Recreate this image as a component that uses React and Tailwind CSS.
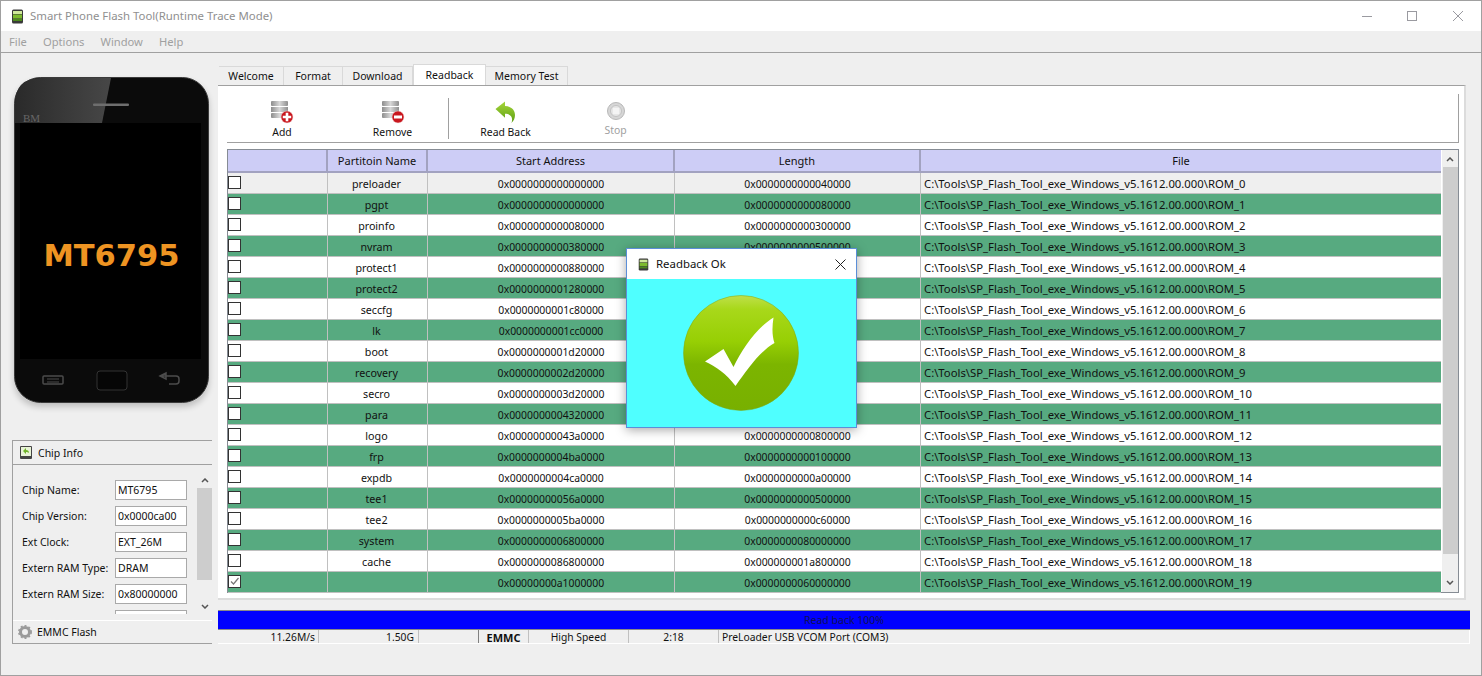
import React from "react";

const rows = [
  ["preloader", "0x0000000000000000", "0x0000000000040000"],
  ["pgpt", "0x0000000000000000", "0x0000000000080000"],
  ["proinfo", "0x0000000000080000", "0x0000000000300000"],
  ["nvram", "0x0000000000380000", "0x0000000000500000"],
  ["protect1", "0x0000000000880000", "0x0000000000a00000"],
  ["protect2", "0x0000000001280000", "0x0000000000a00000"],
  ["seccfg", "0x0000000001c80000", "0x0000000000040000"],
  ["lk", "0x0000000001cc0000", "0x0000000000060000"],
  ["boot", "0x0000000001d20000", "0x0000000001000000"],
  ["recovery", "0x0000000002d20000", "0x0000000001000000"],
  ["secro", "0x0000000003d20000", "0x0000000000600000"],
  ["para", "0x0000000004320000", "0x0000000000080000"],
  ["logo", "0x00000000043a0000", "0x0000000000800000"],
  ["frp", "0x0000000004ba0000", "0x0000000000100000"],
  ["expdb", "0x0000000004ca0000", "0x0000000000a00000"],
  ["tee1", "0x00000000056a0000", "0x0000000000500000"],
  ["tee2", "0x0000000005ba0000", "0x0000000000c60000"],
  ["system", "0x0000000006800000", "0x0000000080000000"],
  ["cache", "0x0000000086800000", "0x000000001a800000"],
  ["", "0x00000000a1000000", "0x0000000060000000"],
];

const chipInfo = [
  ["Chip Name:", "MT6795"],
  ["Chip Version:", "0x0000ca00"],
  ["Ext Clock:", "EXT_26M"],
  ["Extern RAM Type:", "DRAM"],
  ["Extern RAM Size:", "0x80000000"],
  ["", ""],
];

const AppIcon = ({ className }) => (
  <svg viewBox="0 0 12 15" className={className}>
    <rect x="0.5" y="0.5" width="11" height="14" rx="1.5" fill="#3a3a3a" />
    <rect x="1.5" y="2" width="9" height="3" fill="#cfe89a" />
    <rect x="1.5" y="5.5" width="9" height="4" fill="#7dbb2e" />
    <rect x="1.5" y="10" width="9" height="2" fill="#4c8a1c" />
  </svg>
);

const DbIcon = ({ minus }) => (
  <svg width="24" height="24" viewBox="0 0 24 24">
    <defs>
      <linearGradient id="dbBand" x1="0" x2="1" y1="0" y2="0">
        <stop offset="0" stopColor="#8d8d8d" />
        <stop offset="0.5" stopColor="#d8d8d8" />
        <stop offset="1" stopColor="#8f8f8f" />
      </linearGradient>
    </defs>
    <rect x="1" y="1" width="17" height="5" rx="1" fill="url(#dbBand)" />
    <rect x="1" y="7" width="17" height="5" fill="url(#dbBand)" />
    <rect x="1" y="13" width="17" height="5" rx="1" fill="url(#dbBand)" />
    <circle cx="17" cy="17" r="6" fill="#c9171e" stroke="#f3d6d6" strokeWidth="0.5" />
    {minus ? (
      <rect x="13" y="15.5" width="8" height="3" fill="#fff" />
    ) : (
      <path d="M15.7 12.8h2.6v2.9h2.9v2.6h-2.9v2.9h-2.6v-2.9h-2.9v-2.6h2.9z" fill="#fff" />
    )}
  </svg>
);

const BackIcon = () => (
  <svg width="24" height="24" viewBox="0 0 24 24">
    <defs>
      <linearGradient id="backGreen" x1="0" x2="0" y1="0" y2="1">
        <stop offset="0" stopColor="#a6d63a" />
        <stop offset="1" stopColor="#5c9e12" />
      </linearGradient>
    </defs>
    <path d="M1.5 9 11 1.5v4.6c6 .2 10 3.6 10 9 0 3.200-1.200 6-3.600 7.900 1-2.400 1-5.200-.6-7.100-1.400-1.600-3.600-2.200-5.800-2.200v4z" fill="url(#backGreen)" />
  </svg>
);

const StopIcon = () => (
  <svg width="24" height="24" viewBox="0 0 24 24">
    <circle cx="12" cy="11" r="8.500" fill="#d6d6d6" stroke="#b8b8b8" />
    <circle cx="12" cy="11" r="5.500" fill="#e6e6e6" stroke="#c2c2c2" />
    <rect x="9" y="8" width="6" height="6" fill="#f4f4f4" />
  </svg>
);

const PhoneArt = () => (
  <svg viewBox="0 0 195 326" className="absolute inset-0 w-full h-full">
    <defs>
      <linearGradient id="gloss" x1="0" x2="1" y1="0" y2="0">
        <stop offset="0" stopColor="#2a2a2a" />
        <stop offset="1" stopColor="#474747" />
      </linearGradient>
    </defs>
    <rect x="0.5" y="0.5" width="194" height="325" rx="26" fill="#0b0b0b" stroke="#3b3b3b" />
    <path d="M27 1H97L88 46H1V27Q1 1 27 1Z" fill="url(#gloss)" />
    <rect x="79" y="26.500" width="36" height="2.500" rx="1" fill="#6e6e6e" />
    <text x="9" y="45" fontSize="11" fontFamily="Liberation Serif, serif" fill="#666">BM</text>
    <rect x="6" y="46" width="181" height="236" fill="#000" />
    <rect x="29" y="299" width="20" height="8" rx="1" fill="none" stroke="#4c4c4c" strokeWidth="1.500" />
    <path d="M33 302h12M33 305h12" stroke="#4c4c4c" />
    <rect x="83" y="294" width="30" height="19" rx="3" fill="#060606" stroke="#333" />
    <path d="M146 299h16q3 0 3 3v2q0 3-3 3h-7M146 299l6-3v6z" fill="none" stroke="#4c4c4c" strokeWidth="1.500" />
  </svg>
);

const Check = ({ on }) => (
  <span className="w-[13px] h-[13px] mt-[3px] border border-[#333] bg-white flex items-center justify-center">
    {on && (
      <svg width="11" height="11" viewBox="0 0 11 11">
        <path d="M2 5.500 4.500 8 9.500 2" fill="none" stroke="#777" strokeWidth="1.200" />
      </svg>
    )}
  </span>
);

const Tab = ({ label, w, active }) => (
  <div
    className={
      active
        ? "h-[21px] bg-white border border-b-0 border-[#d9d9d9] flex items-center justify-center"
        : "h-[19px] bg-[#efefef] border border-b-0 border-l-0 border-[#d9d9d9] flex items-center justify-center"
    }
    style={{ width: w }}
  >
    {label}
  </div>
);

const ToolButton = ({ icon, label, w, muted }) => (
  <div className="flex flex-col items-center text-[10.400px]" style={{ width: w }}>
    <div className="h-[24px] flex items-center">{icon}</div>
    <div className={muted ? "mt-[1px] text-[#a0a0a0]" : "mt-[3px]"}>{label}</div>
  </div>
);

const App = () => {
  return (
    <div className="relative w-[1482px] h-[676px] bg-[#efefef] border border-[#a0a0a0] flex flex-col overflow-hidden text-[10.500px] leading-none text-[#111] font-['Noto_Sans',sans-serif]">
      <div className="h-[30px] shrink-0 bg-white flex items-center pl-[10px] text-[#8f8f8f] text-[11.400px]">
        <AppIcon className="w-[13px] h-[15px]" />
        <span className="ml-[6px]">Smart Phone Flash Tool(Runtime Trace Mode)</span>
        <div className="ml-auto flex items-center text-[#9a9a9a]">
          <div className="w-[10px] h-px bg-[#9a9aa0] mr-[35px]" />
          <div className="w-[10px] h-[10px] border border-[#9a9aa0] mr-[36px]" />
          <svg width="10" height="10" viewBox="0 0 10 10" className="mr-[18px]">
            <path d="M0 0 10 10M10 0 0 10" stroke="#9a9aa0" />
          </svg>
        </div>
      </div>

      <div className="h-[22px] shrink-0 border-b border-[#a0a0a0] flex items-center pl-[8px] gap-[16px] text-[#a0a0a0] text-[11.200px]">
        <span>File</span>
        <span>Options</span>
        <span>Window</span>
        <span>Help</span>
      </div>

      <div className="flex-1 flex min-h-0">
        <div className="w-[217px] shrink-0 flex flex-col pl-[11px]">
          <div className="relative ml-[2px] mt-[24px] w-[195px] h-[326px] flex items-center justify-center shadow-[0_4px_6px_rgba(0,0,0,0.2)] rounded-[26px]">
            <PhoneArt />
            <span className="relative mt-[32px] text-[30.500px] font-bold text-[#ee9422] font-['DejaVu_Sans',sans-serif]">MT6795</span>
          </div>

          <div className="mt-[37px] w-[200px] h-[204px] border border-r-0 border-[#a0a0a0] flex flex-col">
            <div className="h-[24px] shrink-0 border-b border-[#a0a0a0] flex items-center pl-[7px]">
              <svg width="12" height="13" viewBox="0 0 12 13">
                <rect width="12" height="13" rx="1" fill="#444" />
                <rect x="1" y="1" width="10" height="9" fill="#e8f3d6" />
                <path d="M3 5 6 2v2c2 0 3 1 3 3-1-1-2-1-3-1v2z" fill="#6fb32a" />
              </svg>
              <span className="ml-[6px] pt-[2px]">Chip Info</span>
            </div>
            <div className="flex h-[143px] shrink-0 mt-[6px] mb-[6px]">
              <div className="w-[184px] overflow-hidden pt-[9px] pl-[9px] flex flex-col gap-[6px]">
                {chipInfo.map(([name, value], i) => (
                  <div key={i} className="flex items-center h-[20px] shrink-0">
                    <span className="w-[93px]">{name}</span>
                    <span className="w-[72px] h-[20px] shrink-0 bg-white border border-[#a9a9a9] flex items-center pl-[2px]">{value}</span>
                  </div>
                ))}
              </div>
              <div className="w-[15px] h-[143px] flex flex-col items-center">
                <svg width="8" height="5" viewBox="0 0 8 5" className="mt-[7px]">
                  <path d="M1 4 4 1 7 4" fill="none" stroke="#555" strokeWidth="1.500" />
                </svg>
                <div className="w-full h-[92px] bg-[#cdcdcd] mt-[5px]" />
                <svg width="8" height="5" viewBox="0 0 8 5" className="mt-auto mb-[5px]">
                  <path d="M1 1 4 4 7 1" fill="none" stroke="#555" strokeWidth="1.500" />
                </svg>
              </div>
            </div>
            <div className="flex-1 border-t border-white flex items-center pl-[5px]">
              <svg width="14" height="14" viewBox="0 0 14 14">
                <circle cx="7" cy="7" r="4.500" fill="none" stroke="#9a9a9a" strokeWidth="3" />
                <circle cx="7" cy="7" r="6.200" fill="none" stroke="#9a9a9a" strokeWidth="1.500" strokeDasharray="2 2" />
              </svg>
              <span className="ml-[5px]">EMMC Flash</span>
            </div>
          </div>
        </div>

        <div className="flex-1 flex flex-col min-w-0 pr-[12px]">
          <div className="mt-[11px] h-[21px] shrink-0 flex items-end pl-[1px]">
            <Tab label="Welcome" w={65} />
            <Tab label="Format" w={59} />
            <Tab label="Download" w={70} />
            <Tab label="Readback" w={73} active />
            <Tab label="Memory Test" w={82} />
          </div>
          <div className="h-[515px] w-[1248px] shrink-0 border-t border-[#a0a0a0] bg-white border-r-2 border-b-2 border-r-[#dcdcdc] border-b-[#dcdcdc] pl-[9px] pt-[8px] flex flex-col">
            <div className="w-[1232px] h-[49px] shrink-0 border-r border-b border-[#a0a0a0] flex items-start pt-[6px]">
              <ToolButton icon={<DbIcon />} label="Add" w={110} />
              <ToolButton icon={<DbIcon minus />} label="Remove" w={111} />
              <div className="w-px h-[41px] bg-[#a0a0a0] mt-[-2px]" />
              <ToolButton icon={<BackIcon />} label="Read Back" w={113} />
              <ToolButton icon={<StopIcon />} label="Stop" w={107} muted />
            </div>

            <div className="mt-[6px] w-[1232px] h-[444px] shrink-0 border border-[#868c94] flex text-[10.400px]">
              <div className="w-[1213px] shrink-0 flex flex-col">
                <div className="h-[23px] shrink-0 bg-[#cdcdf6] flex items-center text-center text-[11px] border-b-2 border-[#a2a2c0]">
                  <div className="w-[100px] h-full border-r-2 border-[#a2a2c0]" />
                  <div className="w-[100px] h-full border-r-2 border-[#a2a2c0] flex items-center justify-center">Partitoin Name</div>
                  <div className="w-[247px] h-full border-r-2 border-[#a2a2c0] flex items-center justify-center">Start Address</div>
                  <div className="w-[246px] h-full border-r-2 border-[#a2a2c0] flex items-center justify-center">Length</div>
                  <div className="flex-1 h-full flex items-center justify-center">File</div>
                </div>
                {rows.map(([name, start, length], i) => (
                  <div
                    key={i}
                    className={
                      i === 0
                        ? "h-[21px] shrink-0 flex bg-[#efefef] border-b border-[#c0c0c0]"
                        : i % 2 === 1
                        ? "h-[21px] shrink-0 flex bg-[#57aa80] border-b border-[#c0c0c0]"
                        : "h-[21px] shrink-0 flex bg-white border-b border-[#c0c0c0]"
                    }
                  >
                    <div className="w-[100px] border-r border-[#c0c0c0]">
                      <Check on={i === 19} />
                    </div>
                    <div className="w-[100px] border-r border-[#c0c0c0] flex items-center justify-center pt-[2px] pr-[2px] text-[10.700px]">{name}</div>
                    <div className="w-[247px] border-r border-[#c0c0c0] flex items-center justify-center pt-[2px]">{start}</div>
                    <div className="w-[246px] border-r border-[#c0c0c0] flex items-center justify-center pt-[2px]">{length}</div>
                    <div className="flex-1 flex items-center pl-[3px] pt-[2px] text-[11.300px]">{`C:\\Tools\\SP_Flash_Tool_exe_Windows_v5.1612.00.000\\ROM_${i}`}</div>
                  </div>
                ))}
              </div>
              <div className="flex-1 bg-[#efefef] border-l border-white flex flex-col items-center">
                <svg width="8" height="5" viewBox="0 0 8 5" className="mt-[7px]">
                  <path d="M1 4 4 1 7 4" fill="none" stroke="#555" strokeWidth="1.500" />
                </svg>
                <div className="w-[15px] h-[387px] bg-[#cdcdcd] mt-[5px]" />
                <svg width="8" height="5" viewBox="0 0 8 5" className="mt-auto mb-[7px]">
                  <path d="M1 1 4 4 7 1" fill="none" stroke="#555" strokeWidth="1.500" />
                </svg>
              </div>
            </div>
          </div>

          <div className="mt-[10px] w-[1252px] h-[20px] shrink-0 bg-[#0000ff] border-t border-b border-[#8a8a8a] flex items-center justify-center text-[#10105a]">
            Read back 100%
          </div>
          <div className="w-[1252px] h-[14px] shrink-0 flex border-r border-b border-white text-[10.300px]">
            <div className="w-[101px] border-r border-[#c0c0c0] flex items-center justify-end pr-[3px] pt-[2px]">11.26M/s</div>
            <div className="w-[100px] border-r border-[#c0c0c0] flex items-center justify-end pr-[4px] pt-[2px]">1.50G</div>
            <div className="w-[60px] border-r border-[#808080]" />
            <div className="w-[50px] border-r border-[#c0c0c0] flex items-center justify-center pt-[2px] font-bold text-[11px]">EMMC</div>
            <div className="w-[100px] border-r border-[#c0c0c0] flex items-center justify-center pt-[2px]">High Speed</div>
            <div className="w-[90px] border-r border-[#c0c0c0] flex items-center justify-center pt-[2px]">2:18</div>
            <div className="flex-1 flex items-center pl-[3px] pt-[2px]">PreLoader USB VCOM Port (COM3)</div>
          </div>
        </div>
      </div>

      <div className="absolute left-[625px] top-[247px] w-[231px] h-[180px] border border-[#5b8ed8] shadow-[0_2px_10px_rgba(0,0,0,0.35)] flex flex-col">
        <div className="h-[30px] shrink-0 bg-white flex items-center pl-[11px] text-[11.400px]">
          <AppIcon className="w-[11px] h-[13px]" />
          <span className="ml-[7px]">Readback Ok</span>
          <svg width="11" height="11" viewBox="0 0 11 11" className="ml-auto mr-[10px]">
            <path d="M0.500 0.500 10.500 10.500M10.500 0.500 0.500 10.500" stroke="#222" />
          </svg>
        </div>
        <div className="flex-1 bg-[#4fffff] flex items-center justify-center pr-[1px]">
          <svg width="116" height="116" viewBox="0 0 116 116">
            <defs>
              <linearGradient id="okGreen" x1="0" x2="0" y1="0" y2="1">
                <stop offset="0" stopColor="#bfe04a" />
                <stop offset="0.12" stopColor="#a8d81a" />
                <stop offset="0.4" stopColor="#97cf04" />
                <stop offset="0.6" stopColor="#7cb500" />
                <stop offset="1" stopColor="#78b000" />
              </linearGradient>
            </defs>
            <circle cx="58" cy="58" r="57.500" fill="url(#okGreen)" stroke="#7fa815" strokeWidth="0.500" />
            <path d="M22 66.500 40.500 54 50.500 72C59 55 72 34 90.500 22.500 89 32 89 41 91.500 48 76 57 64 75 52.500 91 43 78 33 72 22 66.500Z" fill="#fff" />
          </svg>
        </div>
      </div>
    </div>
  );
};

export default App;
